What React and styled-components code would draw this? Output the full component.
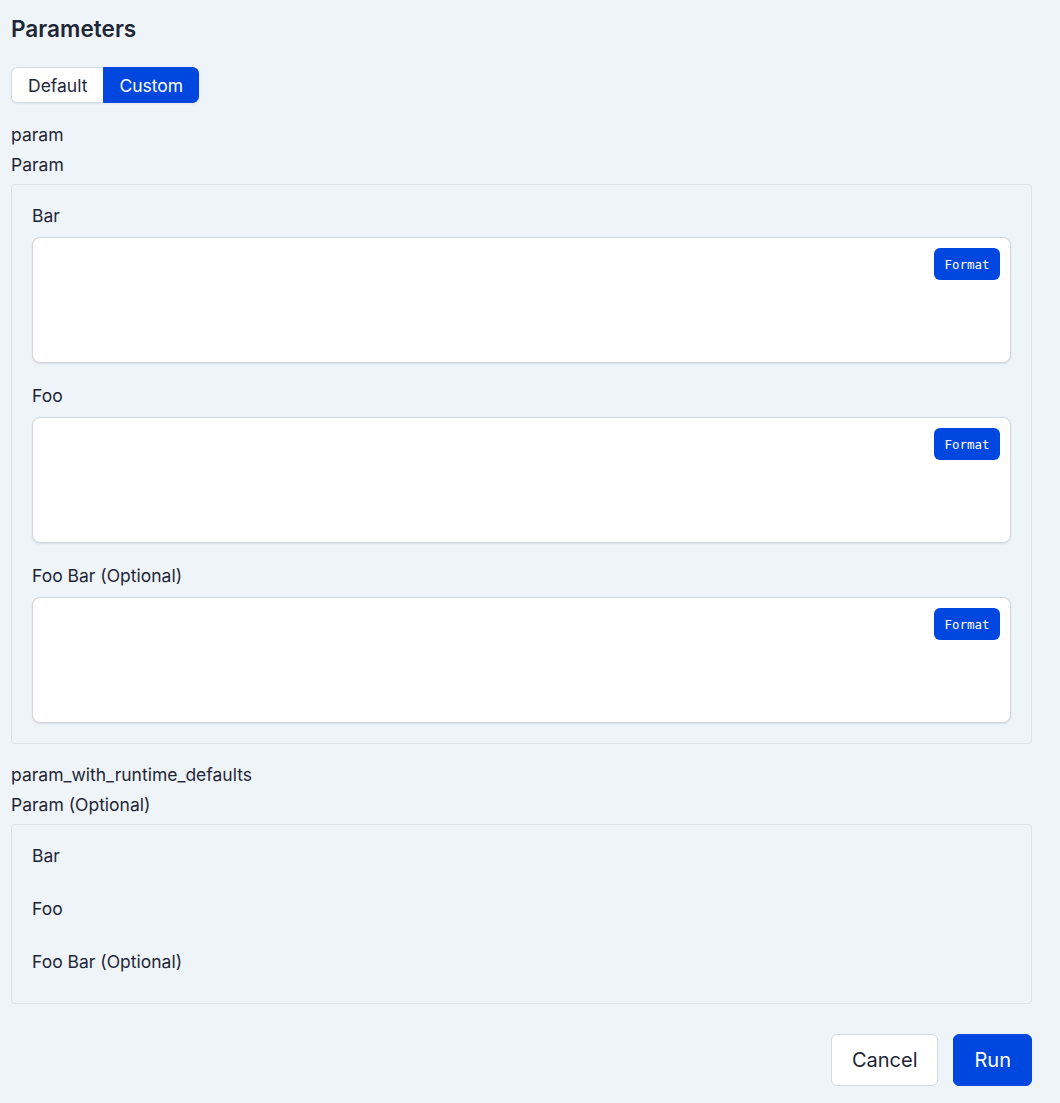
import React from "react";
import styled, { createGlobalStyle } from "styled-components";

const GlobalStyle = createGlobalStyle`
  html, body {
    margin: 0;
    padding: 0;
    background: #eff4f8;
  }
  body {
    font-family: Inter, "Noto Sans", sans-serif;
    color: #1e2637;
  }
`;

const Page = styled.div`
  padding: 14px 28px 17px 11px;
  display: flex;
  flex-direction: column;
`;

const Title = styled.h2`
  margin: 0;
  font-size: 22.6px;
  line-height: 30px;
  font-weight: 600;
  color: #1e2637;
`;

const Toggle = styled.div`
  display: inline-flex;
  align-self: flex-start;
  margin-top: 23px;
  border-radius: 6px;
  overflow: hidden;
  box-shadow: 0 1px 2px rgba(30, 40, 60, 0.08);
`;

const ToggleButton = styled.button`
  font-family: inherit;
  font-size: 17.5px;
  height: 36px;
  padding: 0 ${(p) => (p.$active ? "15px" : "16px")};
  border: 1px solid ${(p) => (p.$active ? "#0047e0" : "#d3d9e2")};
  border-right-width: ${(p) => (p.$active ? "1px" : "0")};
  background: ${(p) => (p.$active ? "#0047e0" : "#ffffff")};
  color: ${(p) => (p.$active ? "#ffffff" : "#1e2637")};
  border-radius: ${(p) => (p.$first ? "6px 0 0 6px" : "0 6px 6px 0")};
  cursor: pointer;
`;

const Section = styled.div`
  display: flex;
  flex-direction: column;
  gap: 8px;
  margin-top: ${(p) => p.$top}px;
`;

const Text = styled.div`
  font-size: 17.5px;
  line-height: 22px;
`;

const Group = styled.div`
  border: 1px solid #dde3ea;
  border-radius: 4px;
  padding: 20px;
  display: flex;
  flex-direction: column;
  gap: ${(p) => (p.$empty ? "21px" : "22px")};
`;

const Field = styled.div`
  display: flex;
  flex-direction: column;
  gap: 10px;
`;

const Editor = styled.div`
  position: relative;
  height: 124px;
  background: #ffffff;
  border: 1px solid #cfd6e0;
  border-radius: 8px;
  box-shadow: 0 1px 2px rgba(30, 40, 60, 0.1);
`;

const FormatButton = styled.button`
  position: absolute;
  top: 10px;
  right: 10px;
  height: 32px;
  width: 66px;
  border: none;
  border-radius: 6px;
  background: #0047e0;
  color: #ffffff;
  font-family: "DejaVu Sans Mono", "Liberation Mono", monospace;
  font-size: 12.5px;
  font-weight: 400;
  cursor: pointer;
`;

const Actions = styled.div`
  display: flex;
  justify-content: flex-end;
  gap: 15px;
  margin-top: 30px;
`;

const ActionButton = styled.button`
  font-family: inherit;
  font-size: 20px;
  height: 52px;
  padding: 0 ${(p) => (p.$primary ? "20px" : "20px")};
  border-radius: 6px;
  border: 1px solid ${(p) => (p.$primary ? "#0047e0" : "#d3d9e2")};
  background: ${(p) => (p.$primary ? "#0047e0" : "#ffffff")};
  color: ${(p) => (p.$primary ? "#ffffff" : "#1e2637")};
  cursor: pointer;
`;

const fields = ["Bar", "Foo", "Foo Bar (Optional)"];

export default function App() {
  return (
    <>
      <GlobalStyle />
      <Page>
        <Title>Parameters</Title>
        <Toggle>
          <ToggleButton $first>Default</ToggleButton>
          <ToggleButton $active>Custom</ToggleButton>
        </Toggle>

        <Section $top={21}>
          <Text>param</Text>
          <Text>Param</Text>
          <Group>
            {fields.map((f) => (
              <Field key={f}>
                <Text>{f}</Text>
                <Editor>
                  <FormatButton>Format</FormatButton>
                </Editor>
              </Field>
            ))}
          </Group>
        </Section>

        <Section $top={20}>
          <Text>param_with_runtime_defaults</Text>
          <Text>Param (Optional)</Text>
          <Group $empty>
            {fields.map((f) => (
              <Field key={f}>
                <Text>{f}</Text>
                <div />
              </Field>
            ))}
          </Group>
        </Section>

        <Actions>
          <ActionButton>Cancel</ActionButton>
          <ActionButton $primary>Run</ActionButton>
        </Actions>
      </Page>
    </>
  );
}
